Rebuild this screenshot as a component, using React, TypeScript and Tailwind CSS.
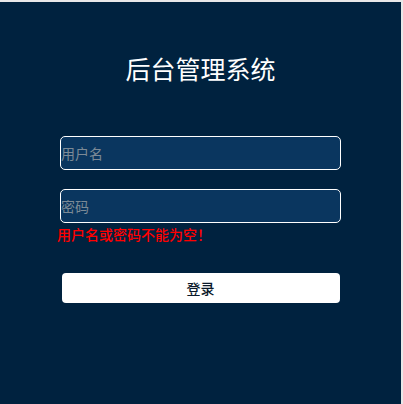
import React, { useState } from "react";

export default function App() {
  const [username, setUsername] = useState("");
  const [password, setPassword] = useState("");

  return (
    <div className="h-[404px] w-[403px] bg-[#e8e8e8] pt-[2px] pr-[2px]">
      <div
        className="h-[402px] bg-[#00223f] flex flex-col items-center pt-[50px]"
        style={{ fontFamily: '"Noto Sans CJK SC", "Noto Sans", sans-serif' }}
      >
        {/* 标题 */}
        <h1 className="text-[25px] leading-[32px] text-white">后台管理系统</h1>

        {/* 表单 */}
        <div className="w-[281px] mt-[52px] flex flex-col">
          <input
            value={username}
            onChange={(e) => setUsername(e.target.value)}
            placeholder="用户名"
            className="h-[34px] w-full rounded-[5px] border border-white bg-[#0a365f] text-[14px] text-white placeholder:text-[#7c8a96] outline-none"
          />
          <input
            type="password"
            value={password}
            onChange={(e) => setPassword(e.target.value)}
            placeholder="密码"
            className="h-[34px] w-full mt-[19px] rounded-[5px] border border-white bg-[#0a365f] text-[14px] text-white placeholder:text-[#7c8a96] outline-none"
          />
          <p className="-ml-[3px] mt-[2px] text-[14px] leading-[18px] font-medium text-[#ff0000]">
            用户名或密码不能为空&#xFF01;&nbsp;
          </p>
          <button className="mt-[30px] mx-auto h-[30px] w-[278px] rounded-[4px] bg-white text-[14px] font-medium text-[#0b1a2b]">
            登录
          </button>
        </div>
      </div>
    </div>
  );
}
